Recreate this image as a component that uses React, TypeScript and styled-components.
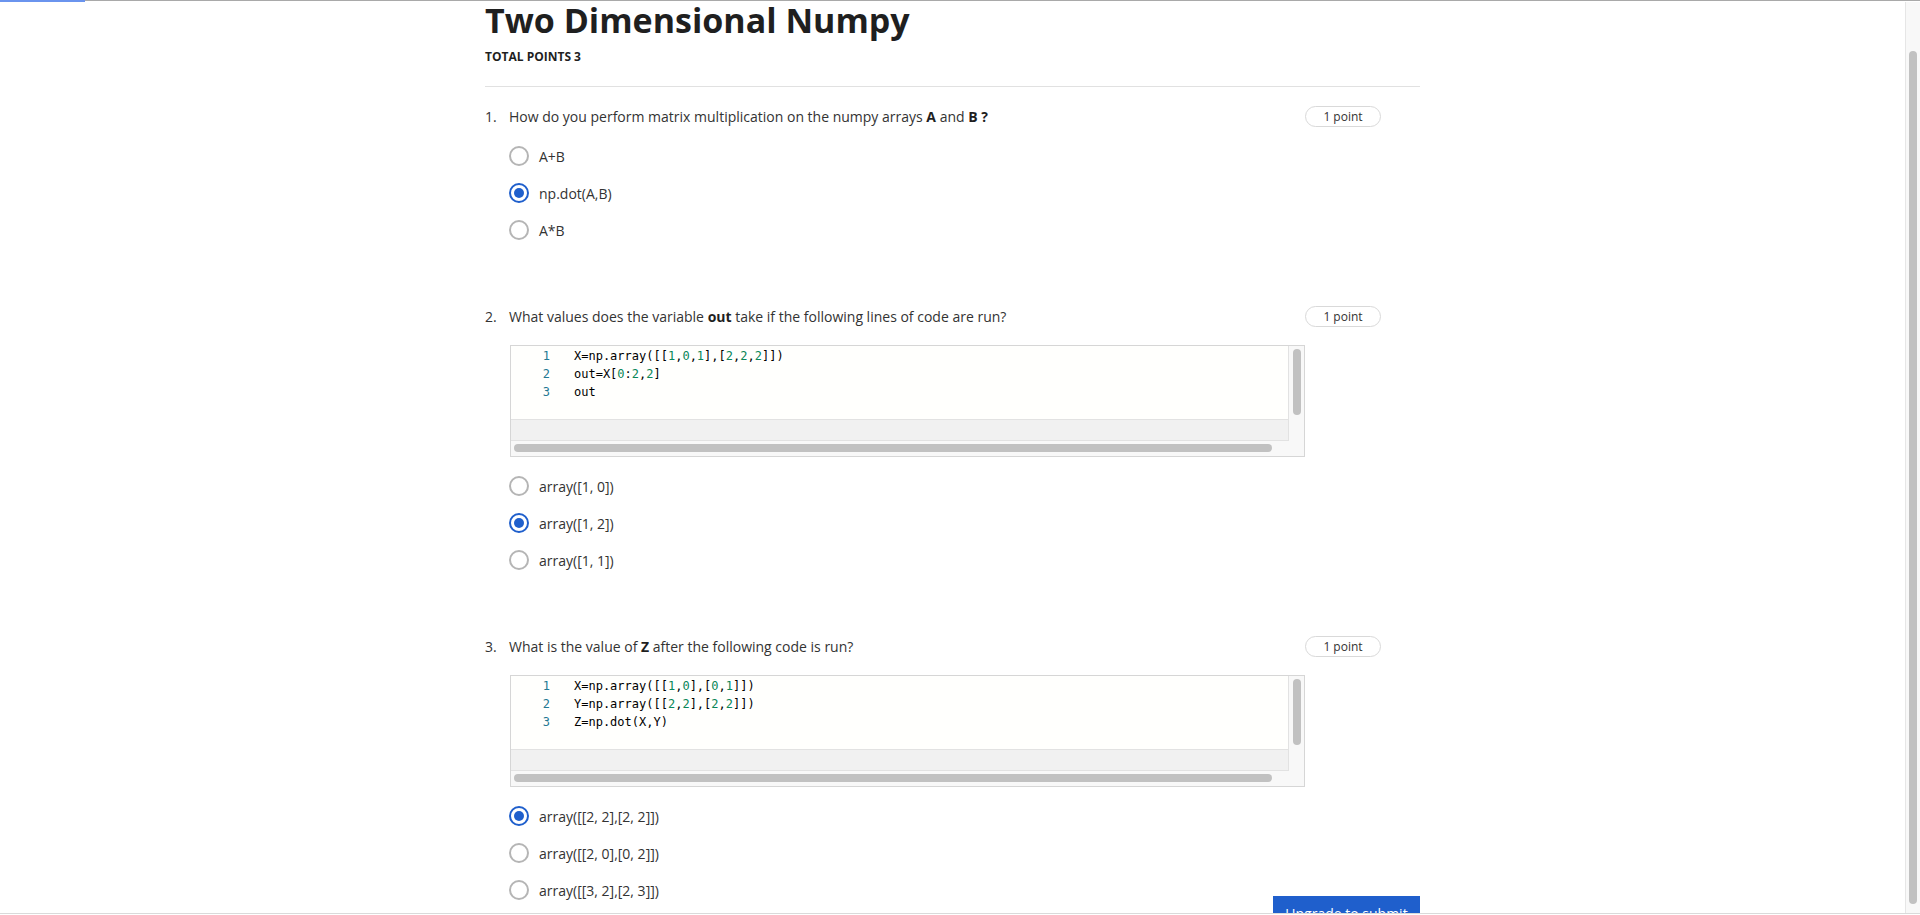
import React from "react";
import styled, { createGlobalStyle } from "styled-components";

interface IQuestion {
	number: number;
	text: React.ReactNode;
	code?: string[];
	options: string[];
	answer: number;
}

const questions: IQuestion[] = [
	{
		number: 1,
		text: (
			<>
				How do you perform matrix multiplication on the numpy arrays{" "}
				<b>A</b> and <b>B ?</b>
			</>
		),
		options: ["A+B", "np.dot(A,B)", "A*B"],
		answer: 1,
	},
	{
		number: 2,
		text: (
			<>
				What values does the variable <b>out</b> take if the following
				lines of code are run?
			</>
		),
		code: ["X=np.array([[1,0,1],[2,2,2]])", "out=X[0:2,2]", "out"],
		options: ["array([1, 0])", "array([1, 2])", "array([1, 1])"],
		answer: 1,
	},
	{
		number: 3,
		text: (
			<>
				What is the value of <b>Z</b> after the following code is run?
			</>
		),
		code: [
			"X=np.array([[1,0],[0,1]])",
			"Y=np.array([[2,2],[2,2]])",
			"Z=np.dot(X,Y)",
		],
		options: [
			"array([[2, 2],[2, 2]])",
			"array([[2, 0],[0, 2]])",
			"array([[3, 2],[2, 3]])",
		],
		answer: 0,
	},
];

function CodeLine({ line }: { line: string }) {
	// digits get the number colour, everything else stays plain
	const parts = line.split(/(\d+)/);
	return (
		<>
			{parts.map((part, i) =>
				/^\d+$/.test(part) ? <Num key={i}>{part}</Num> : part
			)}
		</>
	);
}

function CodeBlock({ lines }: { lines: string[] }) {
	return (
		<CodeBox>
			<Editor>
				<Lines>
					{lines.map((line, i) => (
						<CodeRow key={i}>
							<Gutter>{i + 1}</Gutter>
							<CodeText>
								<CodeLine line={line} />
							</CodeText>
						</CodeRow>
					))}
				</Lines>
				<OutputStrip />
			</Editor>
			<VTrack>
				<VThumb />
			</VTrack>
			<HTrack>
				<HThumb />
			</HTrack>
			<Corner />
		</CodeBox>
	);
}

function Question({ q }: { q: IQuestion }) {
	return (
		<QuestionBlock>
			<QuestionHeader>
				<QuestionText>
					<QNumber>{q.number}.</QNumber>
					<span>{q.text}</span>
				</QuestionText>
				<Points>1 point</Points>
			</QuestionHeader>
			{q.code && <CodeBlock lines={q.code} />}
			<Options>
				{q.options.map((opt, i) => (
					<Option key={i}>
						<Radio checked={i === q.answer} />
						<span>{opt}</span>
					</Option>
				))}
			</Options>
		</QuestionBlock>
	);
}

export default function App() {
	return (
		<>
			<GlobalStyle />
			<Frame>
				<TopBar>
					<Progress />
					<TopLine />
				</TopBar>
				<Viewport>
					<Main>
						<Content>
							<Title>Two Dimensional Numpy</Title>
							<TotalPoints>Total points 3</TotalPoints>
							<Divider />
							<QuestionList>
								{questions.map((q) => (
									<Question key={q.number} q={q} />
								))}
							</QuestionList>
							<SubmitRow>
								<SubmitButton>Upgrade to submit</SubmitButton>
							</SubmitRow>
						</Content>
					</Main>
					<PageScroll>
						<PageThumb />
					</PageScroll>
				</Viewport>
			</Frame>
		</>
	);
}

const GlobalStyle = createGlobalStyle`
	* {
		box-sizing: border-box;
	}
	html, body {
		margin: 0;
		padding: 0;
		background: #fff;
		overflow: hidden;
	}
	body {
		font-family: "Open Sans", "Noto Sans", Arial, sans-serif;
		color: #333;
	}
`;

const Frame = styled.div`
	width: 1920px;
	height: 915px;
	display: flex;
	flex-direction: column;
	padding-bottom: 1px;
`;

const TopBar = styled.div`
	height: 2px;
	display: flex;
	align-items: flex-start;
`;

const Progress = styled.div`
	width: 85px;
	height: 2px;
	background: #6a94ee;
`;

const TopLine = styled.div`
	flex: 1;
	height: 1px;
	background: #a9a9a9;
`;

const Viewport = styled.div`
	flex: 1;
	display: flex;
	overflow: hidden;
	border-bottom: 1px solid #dadada;
`;

const Main = styled.div`
	flex: 1;
	overflow: hidden;
`;

const Content = styled.div`
	width: 935px;
	margin: 0 auto;
`;

const Title = styled.h1`
	margin: 0;
	font-size: 34px;
	line-height: 36px;
	font-weight: 700;
	color: #1f1f1f;
`;

const TotalPoints = styled.div`
	margin-top: 11px;
	font-size: 12px;
	line-height: 16px;
	font-weight: 700;
	text-transform: uppercase;
	color: #1f1f1f;
`;

const Divider = styled.hr`
	margin: 21px 0 0;
	border: none;
	border-top: 1px solid #e1e1e1;
`;

const QuestionList = styled.div`
	display: flex;
	flex-direction: column;
	gap: 66px;
	padding-top: 19px;
`;

const QuestionBlock = styled.section`
	display: flex;
	flex-direction: column;
`;

const QuestionHeader = styled.div`
	display: flex;
	align-items: center;
	justify-content: space-between;
	padding-right: 39px;
`;

const QuestionText = styled.div`
	display: flex;
	font-size: 14px;
	line-height: 20px;
	color: #333;

	b {
		font-weight: 700;
		color: #1f1f1f;
	}
`;

const QNumber = styled.span`
	width: 24px;
	flex-shrink: 0;
`;

const Points = styled.div`
	width: 76px;
	height: 21px;
	display: flex;
	align-items: center;
	justify-content: center;
	border: 1px solid #d9d9d9;
	border-radius: 11px;
	font-size: 12px;
	color: #333;
`;

const CodeBox = styled.div`
	margin: 18px 0 0 25px;
	width: 795px;
	height: 112px;
	display: grid;
	grid-template-columns: 1fr 15px;
	grid-template-rows: 95px 15px;
	border: 1px solid #d6d6d6;
	background: #f8f8f8;
`;

const Editor = styled.div`
	display: flex;
	flex-direction: column;
	background: #fffffd;
	border-right: 1px solid #e2e2e2;
	border-bottom: 1px solid #e2e2e2;
`;

const Lines = styled.div`
	flex: 1;
	padding-top: 1px;
	font-family: "DejaVu Sans Mono", "Liberation Mono", monospace;
	font-size: 12px;
	line-height: 18px;
	color: #000;
`;

const CodeRow = styled.div`
	display: flex;
	white-space: pre;
`;

const Gutter = styled.span`
	width: 39px;
	text-align: right;
	color: #237893;
`;

const CodeText = styled.span`
	padding-left: 24px;
`;

const Num = styled.span`
	color: #098658;
`;

const OutputStrip = styled.div`
	height: 21px;
	background: #f1f1f1;
	border-top: 1px solid #e2e2e2;
`;

const VTrack = styled.div`
	padding: 3px 3px 26px 3px;
	display: flex;
	justify-content: center;
`;

const VThumb = styled.div`
	width: 8px;
	height: 100%;
	border-radius: 4px;
	background: #c1c1c1;
`;

const HTrack = styled.div`
	padding: 3px 17px 4px 3px;
	display: flex;
	align-items: center;
`;

const HThumb = styled.div`
	width: 100%;
	height: 8px;
	border-radius: 4px;
	background: #c1c1c1;
`;

const Corner = styled.div`
	background: #f8f8f8;
`;

const Options = styled.div`
	display: flex;
	flex-direction: column;
	gap: 17px;
	margin: 19px 0 0 24px;
`;

const Option = styled.label`
	display: flex;
	align-items: center;
	gap: 10px;
	height: 20px;
	font-size: 14px;
	color: #333;
`;

const Radio = styled.span<{ checked: boolean }>`
	width: 20px;
	height: 20px;
	border-radius: 50%;
	flex-shrink: 0;
	display: flex;
	align-items: center;
	justify-content: center;
	border: 2px solid ${(props) => (props.checked ? "#1f5fcc" : "#b5b5b5")};

	&::after {
		content: "";
		width: 10px;
		height: 10px;
		border-radius: 50%;
		background: #1f5fcc;
		display: ${(props) => (props.checked ? "block" : "none")};
	}
`;

const SubmitRow = styled.div`
	display: flex;
	justify-content: flex-end;
	margin-top: -4px;
`;

const SubmitButton = styled.button`
	width: 147px;
	height: 40px;
	border: none;
	border-radius: 0;
	background: #1f5fcc;
	color: #fff;
	font-family: "Open Sans", "Noto Sans", Arial, sans-serif;
	font-size: 14px;
	line-height: 20px;
	padding: 8px 0 0;
	display: flex;
	align-items: flex-start;
	justify-content: center;
`;

const PageScroll = styled.div`
	width: 15px;
	background: #f8f8f8;
	border-left: 1px solid #e6e6e6;
	padding: 49px 3px 9px 3px;
`;

const PageThumb = styled.div`
	height: 100%;
	border-radius: 4px;
	background: #c1c1c1;
`;
